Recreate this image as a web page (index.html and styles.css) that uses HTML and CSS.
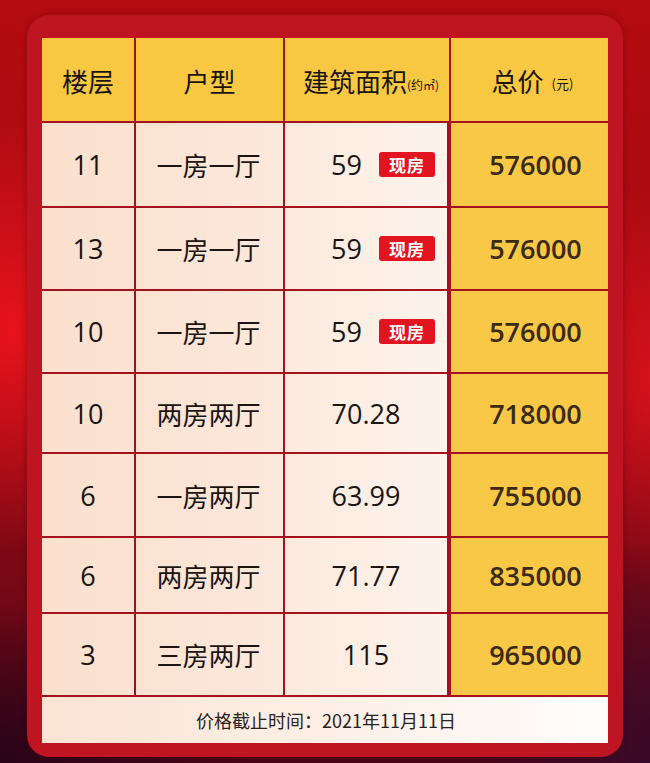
FILE: index.html
```html
<!DOCTYPE html>
<html lang="zh">
<head>
<meta charset="utf-8">
<title>价格表</title>
<link rel="stylesheet" href="styles.css">
</head>
<body>
<div class="page">
  <div class="card">
    <div class="grid">
      <div class="hd">楼层</div>
      <div class="hd">户型</div>
      <div class="hd hd-area">建筑面积<span class="unit">(约㎡)</span></div>
      <div class="hd hd-price">总价<span class="unit unit-yuan">(元)</span></div>

      <div class="c c1 r1">11</div><div class="c c2 r1">一房一厅</div><div class="c c3 r1 live"><span>59</span><span class="badge">现房</span></div><div class="c p r1">576000</div>
      <div class="c c1 r2">13</div><div class="c c2 r2">一房一厅</div><div class="c c3 r2 live"><span>59</span><span class="badge">现房</span></div><div class="c p r2">576000</div>
      <div class="c c1 r3">10</div><div class="c c2 r3">一房一厅</div><div class="c c3 r3 live"><span>59</span><span class="badge">现房</span></div><div class="c p r3">576000</div>
      <div class="c c1 r4">10</div><div class="c c2 r4">两房两厅</div><div class="c c3 r4">70.28</div><div class="c p r4">718000</div>
      <div class="c c1 r5">6</div><div class="c c2 r5">一房两厅</div><div class="c c3 r5">63.99</div><div class="c p r5">755000</div>
      <div class="c c1 r6">6</div><div class="c c2 r6">两房两厅</div><div class="c c3 r6">71.77</div><div class="c p r6">835000</div>
      <div class="c c1 r7">3</div><div class="c c2 r7">三房两厅</div><div class="c c3 r7">115</div><div class="c p r7">965000</div>

      <div class="foot">价格截止时间：2021年11月11日</div>
    </div>
  </div>
</div>
</body>
</html>
```
FILE: styles.css
```css
* { box-sizing: border-box; }
html, body { margin: 0; padding: 0; }
body {
  width: 650px;
  height: 763px;
  overflow: hidden;
  font-family: "Open Sans", "Noto Sans CJK SC", sans-serif;
  color: #1c1512;
}
.page {
  width: 650px;
  height: 763px;
  padding: 15px 27px 6px 27px;
  background:
    radial-gradient(ellipse 120px 220px at 10px 330px, rgba(240,20,30,0.9), rgba(240,20,30,0) 100%),
    radial-gradient(ellipse 260px 160px at 0 763px, #2a0418, rgba(42,4,24,0) 100%),
    radial-gradient(ellipse 200px 220px at 650px 763px, #3a0a2a, rgba(58,10,42,0) 100%),
    radial-gradient(ellipse 90px 200px at 650px 380px, rgba(230,20,30,0.8), rgba(230,20,30,0) 100%),
    linear-gradient(180deg, #b50c10 0%, #a40a12 40%, #7a0815 75%, #4c0618 100%);
}
.card {
  width: 596px;
  height: 742px;
  background: #bf1421;
  border-radius: 22px;
  padding: 23px 15px 14px 15px;
  box-shadow: 0 0 6px rgba(60,0,10,0.35);
}
.grid {
  display: grid;
  grid-template-columns: 92px 147px 164px 157px;
  grid-template-rows: 83px 83px 81px 81px 78px 82px 74px 81px 46px;
  gap: 2px;
  background: #a3121d;
  width: 566px;
}
.hd {
  background: #f9c842;
  display: flex;
  align-items: center;
  justify-content: center;
  font-family: "Noto Sans CJK SC", sans-serif;
  font-size: 26px;
  font-weight: 400;
  color: #1a1410;
  padding-top: 2px;
}
.hd-area { padding-left: 8px; }
.unit {
  font-size: 12px;
  font-weight: 400;
  margin-top: 8px;
}
.hd-price { padding-left: 6px; }
.unit-yuan { font-size: 13px; margin-left: 8px; margin-top: 6px; }

.c {
  display: flex;
  align-items: center;
  justify-content: center;
  font-size: 27px;
  color: #1a1412;
  background-image: linear-gradient(90deg, #fbe0cd 0%, #fce6d8 45%, #fdf3ec 100%);
  background-size: 405px 100%;
  background-repeat: no-repeat;
}
.c1 { background-position: 0 0; }
.c2 { background-position: -94px 0; font-family: "Noto Sans CJK SC", sans-serif; font-size: 26px; padding-right: 2px; }
.c3 { background-position: -243px 0; padding-right: 2px; }
.live { justify-content: flex-end; padding-right: 14px; gap: 17px; }
.badge {
  display: inline-flex;
  align-items: center;
  justify-content: center;
  width: 56px;
  height: 25px;
  background: #e1141f;
  color: #fff;
  border-radius: 3px;
  font-family: "Noto Sans CJK SC", sans-serif;
  font-size: 17px;
  font-weight: 700;
  letter-spacing: 1px;
}
.p {
  background: #f9c846;
  font-weight: 600;
  color: #3a2b14;
  padding-left: 12px;
}
.foot {
  grid-column: 1 / -1;
  display: flex;
  align-items: center;
  justify-content: center;
  background: linear-gradient(90deg, #fbe4d4 0%, #fdefe6 50%, #fffdfc 100%);
  font-family: "Noto Sans CJK SC", sans-serif;
  font-size: 18px;
  color: #2a2220;
  padding-left: 2px;
}
```
